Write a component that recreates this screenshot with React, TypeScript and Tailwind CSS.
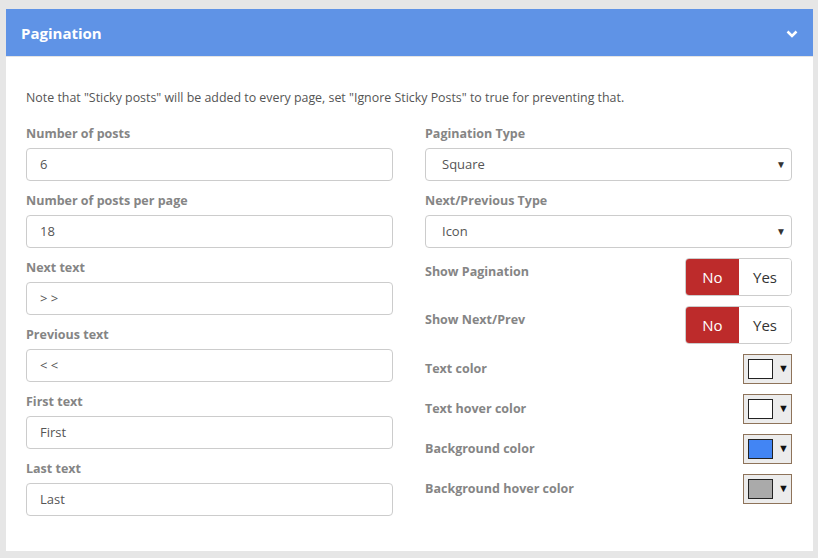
import React from "react";

const font = { fontFamily: '"Open Sans", "Noto Sans", Arial, sans-serif' };

function Field({ label, value }: { label: string; value: string }) {
  return (
    <div className="flex flex-col">
      <label className="text-[12.5px] leading-[18px] font-bold text-[#858585] pt-[1px]">{label}</label>
      <div className="mt-[5px] h-[33px] rounded-[4px] border border-[#cccccc] bg-white flex items-center px-[13px] text-[13px] text-[#555]">
        {value}
      </div>
    </div>
  );
}

function SelectField({ label, value }: { label: string; value: string }) {
  return (
    <div className="flex flex-col">
      <label className="text-[12.5px] leading-[18px] font-bold text-[#858585] pt-[1px]">{label}</label>
      <div className="mt-[5px] h-[33px] rounded-[4px] border border-[#cccccc] bg-white flex items-center justify-between pl-[16px] pr-[5px] text-[13px] text-[#555]">
        <span>{value}</span>
        <span className="text-[10px] text-[#333]">▼</span>
      </div>
    </div>
  );
}

function Toggle({ label }: { label: string }) {
  return (
    <div className="flex items-start justify-between h-[38px]">
      <span className="pt-[5px] text-[12.5px] leading-[18px] font-bold text-[#858585]">{label}</span>
      <div className="flex h-[38px] w-[107px] rounded-[4px] overflow-hidden border border-[#cccccc] text-[15px]">
        <div className="w-[53px] bg-[#bd2b2b] text-white flex items-center justify-center">No</div>
        <div className="flex-1 bg-white text-[#333] flex items-center justify-center">Yes</div>
      </div>
    </div>
  );
}

function ColorRow({ label, color }: { label: string; color: string }) {
  return (
    <div className="flex items-center justify-between h-[29px]">
      <span className="text-[12.5px] leading-[18px] font-bold text-[#858585]">{label}</span>
      <div className="w-[49px] h-[30px] border border-[#8e735a] bg-[#ececec] flex items-center pl-[4px] gap-[5px]">
        <div className="w-[25px] h-[20px] border border-[#222]" style={{ backgroundColor: color }} />
        <span className="text-[11px] text-[#111]">▼</span>
      </div>
    </div>
  );
}

export default function App() {
  return (
    <div className="w-[818px] h-[558px] bg-[#e6e6e6] pt-[9px] pl-[6px] pr-[5px] pb-[7px]" style={font}>
      <div className="bg-white h-full flex flex-col">
        <div className="h-[48px] bg-[#5f93e6] border-b border-[#e4e4e4] flex items-center justify-between pl-[15px] pr-[15px] pt-[2px]">
          <span className="text-white font-bold text-[15px]">Pagination</span>
          <svg width="12" height="8" viewBox="0 0 12 8">
            <polyline points="1.5,1.5 6,6 10.5,1.5" fill="none" stroke="white" strokeWidth="2.5" />
          </svg>
        </div>
        <div className="pt-[32px] pl-[20px] pr-[21px]">
          <p className="text-[12.4px] leading-[18px] text-[#555]">
            Note that "Sticky posts" will be added to every page, set "Ignore Sticky Posts" to true for preventing that.
          </p>
          <div className="mt-[17px] grid grid-cols-2 gap-x-[32px]">
            <div className="flex flex-col gap-[10px]">
              <Field label="Number of posts" value="6" />
              <Field label="Number of posts per page" value="18" />
              <Field label="Next text" value="> >" />
              <Field label="Previous text" value="< <" />
              <Field label="First text" value="First" />
              <Field label="Last text" value="Last" />
            </div>
            <div className="flex flex-col">
              <div className="flex flex-col gap-[10px]">
                <SelectField label="Pagination Type" value="Square" />
                <SelectField label="Next/Previous Type" value="Icon" />
              </div>
              <div className="mt-[10px] flex flex-col gap-[10px]">
                <Toggle label="Show Pagination" />
                <Toggle label="Show Next/Prev" />
              </div>
              <div className="mt-[10px] flex flex-col gap-[11px]">
                <ColorRow label="Text color" color="#ffffff" />
                <ColorRow label="Text hover color" color="#ffffff" />
                <ColorRow label="Background color" color="#4285f4" />
                <ColorRow label="Background hover color" color="#aaaaaa" />
              </div>
            </div>
          </div>
        </div>
      </div>
    </div>
  );
}
